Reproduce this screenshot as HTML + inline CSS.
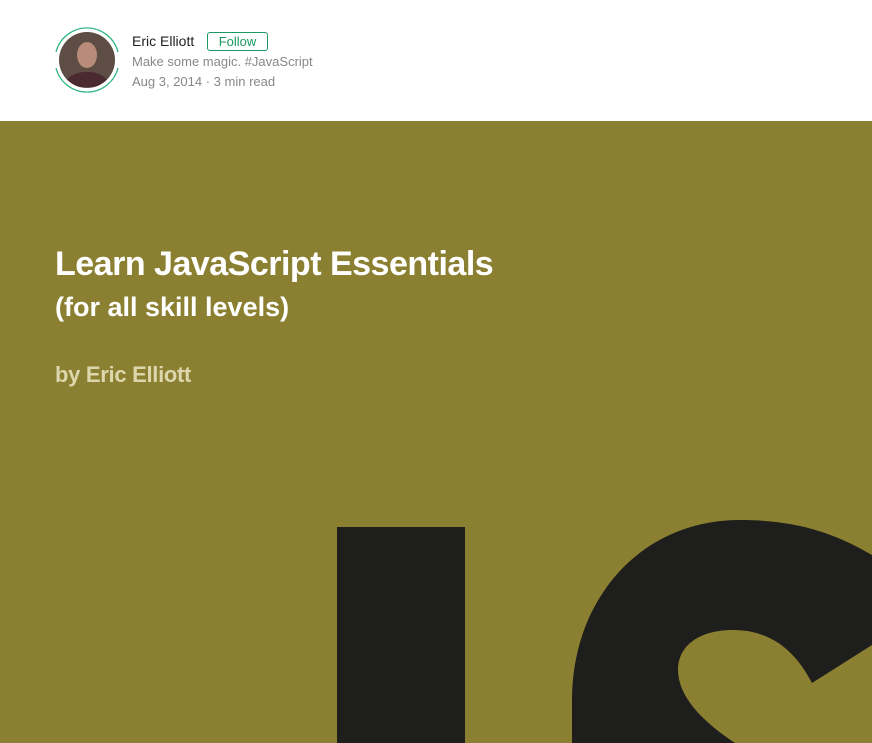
<!DOCTYPE html>
<html><head><meta charset="utf-8"><style>
body{margin:0;width:872px;height:743px;overflow:hidden;background:#fff;font-family:"Liberation Sans",sans-serif;position:relative}
.hdr{position:absolute;left:0;top:0;width:872px;height:121px;background:#fff}
.av{position:absolute;left:52px;top:25px;width:70px;height:70px}
.name{position:absolute;left:132px;top:33px;font-size:14px;color:#222}
.follow{position:absolute;left:207px;top:32px;width:59px;height:17px;border:1px solid #1c9963;border-radius:3px;color:#1c9963;font-size:13px;line-height:17px;text-align:center}
.sub{position:absolute;left:132px;font-size:13px;color:#888}
.hero{position:absolute;left:0;top:121px;width:872px;height:622px;background:#8b8031;overflow:hidden}
.t1{position:absolute;left:55px;top:245px;font-size:34px;font-weight:bold;color:#fff;letter-spacing:-0.5px}
.t2{position:absolute;left:55px;top:292px;font-size:27px;font-weight:bold;color:#fff;letter-spacing:0px}
.t3{position:absolute;left:55px;top:362px;font-size:22px;font-weight:bold;color:#dcd6ac;letter-spacing:-0.3px}
</style></head><body>
<div class="hdr">
<svg class="av" viewBox="0 0 70 70"><path d="M4 27 A32 32 0 0 1 66 27" fill="none" stroke="#2bb37f" stroke-width="1.2"/><path d="M4 43 A32 32 0 0 0 66 43" fill="none" stroke="#2bb37f" stroke-width="1.2"/><clipPath id="c"><circle cx="35" cy="35" r="28"/></clipPath><g clip-path="url(#c)"><rect width="70" height="70" fill="#5e4d44"/><ellipse cx="35" cy="30" rx="10" ry="13" fill="#b88c78"/><path d="M10 62 Q18 46 35 47 Q52 46 60 62 Z" fill="#4a2a30"/></g></svg>
<div class="name">Eric Elliott</div>
<div class="follow">Follow</div>
<div class="sub" style="top:54px">Make some magic. #JavaScript</div>
<div class="sub" style="top:74px">Aug 3, 2014 · 3 min read</div>
</div>
<div class="hero">
<svg width="872" height="622" style="position:absolute;left:0;top:0" viewBox="0 121 872 622">
<rect x="337" y="527" width="128" height="220" fill="#1e1e1c"/>
<path d="M872 555 C830 530 790 520 740 520 C640 520 572 600 572 700 L572 743 L735 743 C700 720 678 695 678 670 C678 645 700 630 733 630 C770 630 795 650 812 683 L872 645 Z" fill="#1e1e1c"/>
</svg>
</div>
<div class="t1">Learn JavaScript Essentials</div>
<div class="t2">(for all skill levels)</div>
<div class="t3">by Eric Elliott</div>
</body></html>
